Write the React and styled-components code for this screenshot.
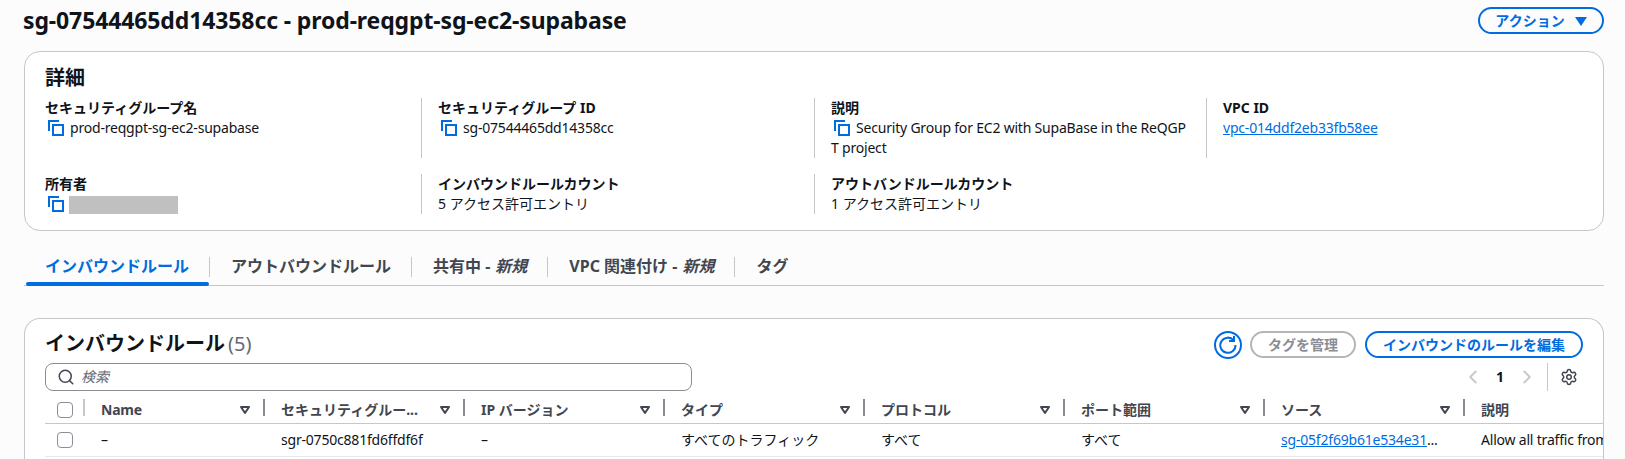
import React from 'react';
import styled, { createGlobalStyle } from 'styled-components';
import { Search, Settings, ChevronLeft, ChevronRight } from 'lucide-react';

const GlobalStyle = createGlobalStyle`
  html, body {
    margin: 0;
    height: 100%;
    overflow: hidden;
    background: #fcfcfc;
  }
  body {
    font-family: "Noto Sans", "Noto Sans CJK JP", sans-serif;
    font-size: 14px;
    line-height: 20px;
    color: #0f141a;
  }
  * { box-sizing: border-box; }
`;

const Page = styled.div`
  width: 1625px;
  height: 459px;
  overflow: hidden;
  padding: 0 21px 0 24px;
`;

const PageHeader = styled.div`
  display: flex;
  justify-content: space-between;
  align-items: flex-start;
  height: 51px;
`;

const Title = styled.h1`
  margin: 5px 0 0 -1px;
  font-size: 23px;
  line-height: 30px;
  font-weight: 700;
  letter-spacing: -0.12px;
`;

const PillButton = styled.button`
  display: inline-flex;
  align-items: center;
  justify-content: center;
  gap: 10px;
  height: 27px;
  padding: 0 ${p => p.$pad || 18}px;
  border-radius: 20px;
  border: 2px solid ${p => (p.disabled ? '#b4b4bb' : '#006ce0')};
  background: transparent;
  color: ${p => (p.disabled ? '#8c8c94' : '#006ce0')};
  font: 700 14px/20px "Noto Sans", "Noto Sans CJK JP", sans-serif;
  white-space: nowrap;
`;

const ActionButton = styled(PillButton)`
  width: 126px;
  padding: 0;
  margin-top: 7px;
`;

const Card = styled.section`
  background: #fff;
  border: 1px solid #c6c6cd;
  border-radius: 16px;
`;

const DetailCard = styled(Card)`
  height: 180px;
  padding: 13px 0 0 20px;
`;

const CardHeading = styled.h2`
  margin: 0;
  font-size: 20px;
  line-height: 26px;
  font-weight: 700;
`;

const DetailGrid = styled.div`
  display: grid;
  grid-template-columns: 377px 393px 392px 393px;
  grid-auto-rows: 60px;
  row-gap: 16px;
  margin-top: 7px;
`;

const DetailCell = styled.div`
  padding: 0 16px 0 ${p => (p.$first ? 0 : 16)}px;
  border-right: ${p => (p.$last ? 'none' : '1px solid #c6c6cd')};
`;

const ShortCell = styled(DetailCell)`
  height: 40px;
`;

const Label = styled.div`
  font-weight: 700;
`;

const Value = styled.div`
  word-break: break-all;
`;

const Latin = styled.span`
  letter-spacing: -0.2px;
`;

const CopyWrap = styled.svg`
  display: inline-block;
  width: 16px;
  height: 16px;
  margin: 0 6px 0 3px;
  vertical-align: -3px;
`;

const Redacted = styled.span`
  display: inline-block;
  width: 109px;
  height: 18px;
  margin-left: -1px;
  vertical-align: -5px;
  background: #c0c0c0;
`;

const LinkText = styled.a`
  color: #006ce0;
  text-decoration: underline;
`;

const TabBar = styled.div`
  display: flex;
  align-items: flex-start;
  height: 55px;
  padding-top: 24px;
  border-bottom: 1px solid #c6c6cd;
`;

const Tab = styled.div`
  position: relative;
  height: 31px;
  display: flex;
  align-items: flex-start;
  padding: 0 21px;
  font-weight: 700;
  font-size: 16px;
  line-height: 22px;
  color: ${p => (p.$active ? '#006ce0' : '#424650')};
  &:not(:last-child)::after {
    content: '';
    position: absolute;
    right: 0;
    top: 2px;
    height: 20px;
    width: 1px;
    background: #c6c6cd;
  }
  ${p => p.$active && `
    &::before {
      content: '';
      position: absolute;
      left: 2px;
      right: 1px;
      bottom: 0;
      height: 4px;
      border-radius: 4px;
      background: #006ce0;
    }
  `}
`;

const Em = styled.em`
  font-style: italic;
  margin-left: 5px;
`;

const TableCard = styled(Card)`
  margin-top: 32px;
  height: 200px;
  border-bottom: none;
  border-bottom-left-radius: 0;
  border-bottom-right-radius: 0;
  overflow: hidden;
  padding-top: 12px;
`;

const TableHead = styled.div`
  display: flex;
  justify-content: space-between;
  padding: 0 20px;
  height: 32px;
`;

const Count = styled.span`
  font-weight: 400;
  color: #656871;
  margin-left: 3px;
`;

const Actions = styled.div`
  display: flex;
  align-items: flex-start;
  gap: 9px;
  height: 28px;
`;

const RefreshButton = styled.div`
  width: 28px;
  height: 28px;
  display: flex;
  align-items: center;
  justify-content: center;
  border: 2px solid #006ce0;
  border-radius: 50%;
  margin-right: -1px;
`;

const ToolRow = styled.div`
  display: flex;
  justify-content: space-between;
  padding: 0 25px 0 20px;
  height: 28px;
`;

const SearchBox = styled.div`
  display: flex;
  align-items: center;
  gap: 6px;
  width: 647px;
  height: 28px;
  padding: 0 11px;
  background: #fff;
  border: 1px solid #8c8c94;
  border-radius: 8px;
  color: #424650;
`;

const Placeholder = styled.span`
  font-style: italic;
  color: #656871;
`;

const Pager = styled.div`
  display: flex;
  align-items: center;
  height: 28px;
  color: #c6c6cd;
`;

const PageNum = styled.span`
  width: 32px;
  text-align: center;
  font-weight: 700;
  color: #0f141a;
`;

const PagerSep = styled.div`
  height: 28px;
  width: 1px;
  background: #c6c6cd;
  margin: 0 12px 0 9px;
`;

const Grid = styled.div`
  display: grid;
  grid-template-columns: 40px 180px repeat(6, 200px) 200px;
  margin: 5px 0 0 20px;
  width: 1600px;
`;

const HeadCell = styled.div`
  position: relative;
  display: flex;
  align-items: center;
  justify-content: space-between;
  height: 28px;
  padding: 0 14px 0 16px;
  font-weight: 700;
  color: #424650;
  border-bottom: 1px solid #c6c6cd;
  white-space: nowrap;
  &::after {
    content: '';
    position: absolute;
    right: 0;
    top: 3px;
    height: 17px;
    width: 2px;
    background: ${p => (p.$light ? '#c6c6cd' : '#8c8c94')};
    display: ${p => (p.$noDivider ? 'none' : 'block')};
  }
`;

const BodyCell = styled.div`
  display: flex;
  align-items: center;
  height: 33px;
  padding: 0 4px 0 16px;
  border-bottom: 1px solid #e8e8ec;
  white-space: nowrap;
  overflow: hidden;
`;

const CheckCell = styled(BodyCell)`
  padding: 0 0 0 12px;
`;

const CheckHead = styled(HeadCell)`
  padding: 0 0 0 12px;
  justify-content: flex-start;
`;

const Checkbox = styled.span`
  display: block;
  width: 16px;
  height: 16px;
  border: 1px solid #8c8c94;
  border-radius: 4px;
  background: #fff;
`;

const Truncated = styled.span`
  overflow: hidden;
  text-overflow: ellipsis;
  white-space: nowrap;
  width: 170px;
  color: #0f141a;
`;

const CopyIcon = () => (
  <CopyWrap viewBox="0 0 16 16" fill="none" stroke="#006ce0" strokeWidth="2">
    <path d="M1 11V1h10" />
    <rect x="5" y="5" width="10" height="10" />
  </CopyWrap>
);

const SortIcon = () => (
  <svg width="12" height="10" viewBox="0 0 12 10" fill="none" stroke="#424650" strokeWidth="2" strokeLinejoin="round">
    <path d="M2 2h8L6 8z" />
  </svg>
);

const RefreshIcon = () => (
  <svg width="20" height="20" viewBox="0 0 20 20" fill="none" stroke="#006ce0" strokeWidth="2">
    <path d="M15.6 5.2A7.6 7.6 0 1 0 17.5 10" />
    <path d="M16 1v5h-5" />
  </svg>
);

const details = [
  { label: 'セキュリティグループ名', value: 'prod-reqgpt-sg-ec2-supabase', copy: true },
  { label: 'セキュリティグループ ID', value: 'sg-07544465dd14358cc', copy: true },
  { label: '説明', value: 'Security Group for EC2 with SupaBase in the ReQGPT project', copy: true },
  { label: 'VPC ID', value: 'vpc-014ddf2eb33fb58ee', link: true },
];

const counts = [
  { label: 'インバウンドルールカウント', value: '5 アクセス許可エントリ' },
  { label: 'アウトバンドルールカウント', value: '1 アクセス許可エントリ', last: true },
];

const tabs = [
  { text: 'インバウンドルール', active: true },
  { text: 'アウトバウンドルール' },
  { text: '共有中 -', tag: '新規' },
  { text: 'VPC 関連付け -', tag: '新規' },
  { text: 'タグ' },
];

const columns = ['セキュリティグルー...', 'IP バージョン', 'タイプ', 'プロトコル', 'ポート範囲', 'ソース'];

const App = () => (
  <Page>
    <GlobalStyle />
    <PageHeader>
      <Title>sg-07544465dd14358cc - prod-reqgpt-sg-ec2-supabase</Title>
      <ActionButton>
        アクション
        <svg width="12" height="10" viewBox="0 0 12 10" fill="#006ce0"><path d="M0 1h12L6 10z" /></svg>
      </ActionButton>
    </PageHeader>

    <DetailCard>
      <CardHeading>詳細</CardHeading>
      <DetailGrid>
        {details.map((d, i) => (
          <DetailCell key={d.label} $first={i === 0} $last={i === 3}>
            <Label>{d.label}</Label>
            <Value>
              {d.copy && <CopyIcon />}
              <Latin>{d.link ? <LinkText>{d.value}</LinkText> : d.value}</Latin>
            </Value>
          </DetailCell>
        ))}
        <ShortCell $first>
          <Label>所有者</Label>
          <Value><CopyIcon /><Redacted /></Value>
        </ShortCell>
        {counts.map(c => (
          <ShortCell key={c.label} $last={c.last}>
            <Label>{c.label}</Label>
            <Value>{c.value}</Value>
          </ShortCell>
        ))}
      </DetailGrid>
    </DetailCard>

    <TabBar>
      {tabs.map(t => (
        <Tab key={t.text} $active={t.active}>
          {t.text}{t.tag && <Em>{t.tag}</Em>}
        </Tab>
      ))}
    </TabBar>

    <TableCard>
      <TableHead>
        <CardHeading>インバウンドルール<Count>(5)</Count></CardHeading>
        <Actions>
          <RefreshButton><RefreshIcon /></RefreshButton>
          <PillButton disabled $pad={16}>タグを管理</PillButton>
          <PillButton $pad={16}>インバウンドのルールを編集</PillButton>
        </Actions>
      </TableHead>
      <ToolRow>
        <SearchBox>
          <Search size={18} strokeWidth={2} />
          <Placeholder>検索</Placeholder>
        </SearchBox>
        <Pager>
          <ChevronLeft size={22} strokeWidth={2} />
          <PageNum>1</PageNum>
          <ChevronRight size={22} strokeWidth={2} />
          <PagerSep />
          <Settings size={18} strokeWidth={2} color="#424650" />
        </Pager>
      </ToolRow>
      <Grid>
        <CheckHead $light><Checkbox /></CheckHead>
        <HeadCell><Latin>Name</Latin><SortIcon /></HeadCell>
        {columns.map(c => (
          <HeadCell key={c}>{c}<SortIcon /></HeadCell>
        ))}
        <HeadCell $noDivider>説明</HeadCell>

        <CheckCell><Checkbox /></CheckCell>
        <BodyCell>–</BodyCell>
        <BodyCell><Latin>sgr-0750c881fd6ffdf6f</Latin></BodyCell>
        <BodyCell>–</BodyCell>
        <BodyCell>すべてのトラフィック</BodyCell>
        <BodyCell>すべて</BodyCell>
        <BodyCell>すべて</BodyCell>
        <BodyCell>
          <Truncated><Latin><LinkText>sg-05f2f69b61e534e31</LinkText>...</Latin></Truncated>
        </BodyCell>
        <BodyCell><Latin>Allow all traffic from</Latin></BodyCell>
      </Grid>
    </TableCard>
  </Page>
);

export default App;
